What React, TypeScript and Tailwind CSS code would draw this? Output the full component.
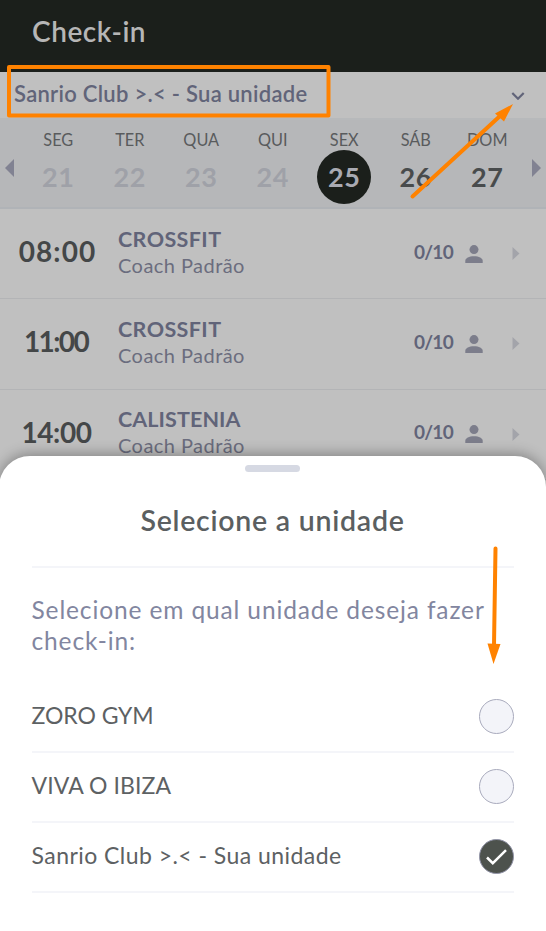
import React from "react";

type Day = { label: string; num: string; state: "past" | "active" | "next" };

const days: Day[] = [
  { label: "SEG", num: "21", state: "past" },
  { label: "TER", num: "22", state: "past" },
  { label: "QUA", num: "23", state: "past" },
  { label: "QUI", num: "24", state: "past" },
  { label: "SEX", num: "25", state: "active" },
  { label: "SÁB", num: "26", state: "next" },
  { label: "DOM", num: "27", state: "next" },
];

const dayStyle = {
  past: "text-[#9fa1a8]",
  active: "bg-[#1b1f1b] text-[#a9aab2]",
  next: "text-[#484b4c]",
};

const classes = [
  { time: "08:00", timeStyle: "tracking-[1.1px]", name: "CROSSFIT", nameStyle: "tracking-[0.4px]" },
  { time: "11:00", timeStyle: "pr-[3px] tracking-[-1.6px]", name: "CROSSFIT", nameStyle: "tracking-[0.4px]" },
  { time: "14:00", timeStyle: "pr-[2px] tracking-[-0.4px]", name: "CALISTENIA", nameStyle: "tracking-[0.1px]" },
];

const units = [
  { name: "ZORO GYM", style: "tracking-[-0.05px]", checked: false },
  { name: "VIVA O IBIZA", style: "tracking-[0.1px]", checked: false },
  { name: "Sanrio Club >.< - Sua unidade", style: "tracking-[0.45px]", checked: true },
];

function Person() {
  return (
    <svg className="ml-[11px] h-[18px] w-[18px]" viewBox="0 0 18 18" fill="#7c7d8b">
      <circle cx="9" cy="4.6" r="4.5" />
      <path d="M0.3 18v-2.3C0.3 13 4 11.2 9 11.2s8.7 1.8 8.7 4.5V18z" />
    </svg>
  );
}

export default function App() {
  return (
    <div className="relative flex h-[931px] w-[546px] flex-col overflow-hidden bg-[#c0c0c0] font-['Lato',sans-serif]">
      <header className="flex h-[72px] shrink-0 items-start bg-[#1b1f1b] pl-[32px] pt-[14px]">
        <h1 className="whitespace-nowrap text-[28px] font-semibold leading-[34px] tracking-[0.55px] text-[#b6b6b6]">Check-in</h1>
      </header>

      <div className="flex h-[48px] shrink-0 items-center justify-between border-b-2 border-[#b7b9bb] pl-[14px] pr-[21px]">
        <span className="whitespace-nowrap pb-[4px] text-[22px] font-semibold tracking-[0.28px] text-[#616479]">Sanrio Club &gt;.&lt; - Sua unidade</span>
        <svg className="h-[9px] w-[14px]" viewBox="0 0 14 9" fill="none" stroke="#616479" strokeWidth="2.2">
          <path d="M1.3 2 7 7.7 12.7 2" />
        </svg>
      </div>

      <div className="flex h-[89px] shrink-0 items-start border-b-2 border-[#b0b3b7] bg-[#b6b7b9] pl-[5px] pr-[5px]">
        <svg className="mt-[39px] h-[18px] w-[9px]" viewBox="0 0 9 18" fill="#818292">
          <path d="M9 0v18L0 9z" />
        </svg>
        <div className="ml-[8.5px] mr-[9px] grid flex-1 grid-cols-7 pt-[10px]">
          {days.map((d) => (
            <div key={d.num} className="flex flex-col items-center">
              <span className="h-[20px] text-[16.3px] leading-[20px] text-[#595b5d]">{d.label}</span>
              <span className={`flex size-[54px] items-center justify-center rounded-full text-[27px] font-bold tracking-[0.5px] ${dayStyle[d.state]}`}>
                {d.num}
              </span>
            </div>
          ))}
        </div>
        <svg className="mt-[39px] h-[18px] w-[9px]" viewBox="0 0 9 18" fill="#818292">
          <path d="M0 0v18l9-9z" />
        </svg>
      </div>

      {classes.map((c) => (
        <div key={c.time} className="flex h-[90.3px] shrink-0 items-center border-b border-[#b3b4b6] pr-[26px]">
          <span className={`w-[115px] pb-[5px] text-center text-[28px] font-bold text-[#444748] ${c.timeStyle}`}>{c.time}</span>
          <div className="flex flex-1 flex-col pb-[4px] pl-[3px]">
            <span className={`text-[21.5px] font-bold leading-[26px] text-[#616479] ${c.nameStyle}`}>{c.name}</span>
            <span className="text-[20px] leading-[26px] tracking-[0.45px] text-[#6b6d7e]">Coach Padrão</span>
          </div>
          <span className="mr-[1px] pb-[3px] text-[19px] font-bold tracking-[-0.7px] text-[#616479]">0/10</span>
          <Person />
          <svg className="ml-[29px] h-[13px] w-[8px]" viewBox="0 0 8 13" fill="#a3a4aa">
            <path d="M0.5 0v13L7.5 6.5z" />
          </svg>
        </div>
      ))}

      <section className="absolute bottom-0 left-[-1px] right-0 top-[456px] flex flex-col rounded-t-[31px] bg-white px-[32.5px] shadow-[0_-2px_14px_rgba(0,0,0,0.32)]">
        <div className="mt-[9px] h-[7px] w-[55px] shrink-0 self-center rounded-full bg-[#d6d9e3]" />
        <h2 className="mt-[31px] whitespace-nowrap text-center text-[28.5px] font-semibold leading-[34px] tracking-[0.75px] text-[#5b5f61]">Selecione a unidade</h2>
        <div className="mt-[29px] h-[2px] shrink-0 bg-[#f4f5f9]" />
        <p className="mt-[26px] whitespace-nowrap text-[24.5px] leading-[31px] tracking-[0.87px] text-[#8286a0]">
          Selecione em qual unidade deseja fazer
          <br />
          check-in:
        </p>
        <ul className="mt-[26.5px]">
          {units.map((u) => (
            <li key={u.name} className="flex h-[70px] items-center justify-between border-b-2 border-[#f4f5f9]">
              <span className={`whitespace-nowrap pb-[2px] text-[23px] text-[#5d6163] ${u.style}`}>{u.name}</span>
              {u.checked ? (
                <span className="mr-[-0.5px] flex size-[35px] items-center justify-center rounded-full border border-[#9294a8] bg-[#4d524d]">
                  <svg className="h-[16px] w-[21px]" viewBox="0 0 21 16" fill="none" stroke="#fff" strokeWidth="2.5">
                    <path d="M1 8.5 6.8 14.2 20 1.2" />
                  </svg>
                </span>
              ) : (
                <span className="mr-[-0.5px] size-[35px] rounded-full border border-[#a9abbd] bg-[#f3f4f9]" />
              )}
            </li>
          ))}
        </ul>
      </section>

      {/* Tutorial annotations drawn above the interface */}
      <svg className="pointer-events-none absolute inset-0 h-[931px] w-[546px]" viewBox="0 0 546 931" fill="none" stroke="#ff8200" strokeWidth="4">
        <rect x="9" y="67" width="319.5" height="48.5" strokeLinejoin="round" />
        <path d="M412.5 196.5 500 116" strokeLinecap="round" />
        <path d="M513 104 495 113.5 504 121.5z" fill="#ff8200" stroke="none" />
        <path d="M495.5 548.5 494 645" strokeLinecap="round" />
        <path d="M487.5 643.5 500.5 644 493.5 664z" fill="#ff8200" stroke="none" />
      </svg>
    </div>
  );
}
